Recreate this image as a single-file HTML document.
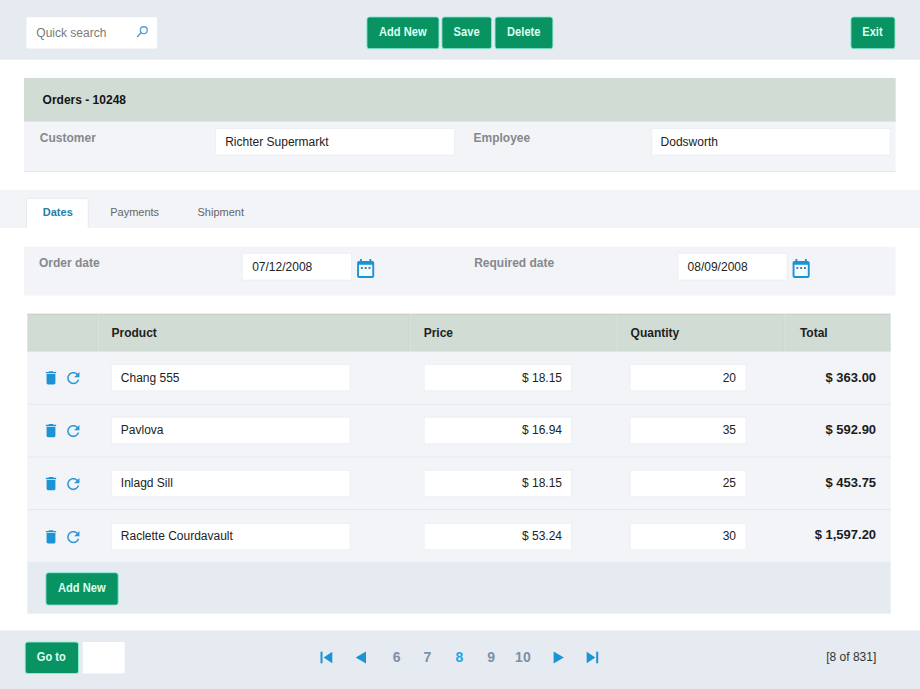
<!DOCTYPE html>
<html lang="en">
<head>
<meta charset="utf-8">
<title>Orders - 10248</title>
<style>
html,body{margin:0;padding:0;}
body{width:920px;height:689px;overflow:hidden;background:#fff;font-family:"Liberation Sans",sans-serif;color:#222;position:relative;}
#bg{position:absolute;left:0;top:0;}
.t{position:absolute;white-space:nowrap;line-height:16px;}
</style>
</head>
<body>
<svg id="bg" width="920" height="689" viewBox="0 0 920 689">
<rect x="0" y="0" width="920" height="59.7" fill="#e6eaf1"/>
<rect x="26.5" y="17.25" width="130.6" height="31.25" fill="#fff"/>
<rect x="366.9" y="16.9" width="72.1" height="31.85" fill="#0a9362" rx="2.6" stroke="#8eeeda" stroke-width="0.9"/>
<rect x="441.9" y="16.9" width="49.7" height="31.85" fill="#0a9362" rx="2.6" stroke="#8eeeda" stroke-width="0.9"/>
<rect x="495" y="16.9" width="57.9" height="31.85" fill="#0a9362" rx="2.6" stroke="#8eeeda" stroke-width="0.9"/>
<rect x="850.9" y="16.9" width="44.1" height="31.85" fill="#0a9362" rx="2.6" stroke="#8eeeda" stroke-width="0.9"/>
<rect x="24" y="78" width="871.6" height="93.6" fill="#f2f4f8"/>
<rect x="24" y="171" width="871.6" height="0.7" fill="#dfe2e7"/>
<rect x="24" y="78" width="871.6" height="43.6" fill="#d1dcd4"/>
<rect x="215.6" y="128.5" width="238.8" height="26.6" fill="#fff" stroke="#eceff3" stroke-width="1"/>
<rect x="651.7" y="128.5" width="238.5" height="26.6" fill="#fff" stroke="#eceff3" stroke-width="1"/>
<rect x="0" y="190" width="920" height="37.8" fill="#f2f4f8"/>
<path d="M26.5 228.5 V200.3 a2 2 0 0 1 2 -2 H86.2 a2 2 0 0 1 2 2 V228.5" fill="#fff" stroke="#e7eaee" stroke-width="1"/>
<rect x="26" y="227.8" width="64" height="1.4" fill="#fff"/>
<rect x="24" y="246.8" width="871.6" height="48.8" fill="#f2f4f8"/>
<rect x="242.2" y="253.3" width="109.4" height="26.9" fill="#fff" stroke="#eceff3" stroke-width="1"/>
<rect x="677.9" y="253.3" width="109.3" height="26.9" fill="#fff" stroke="#eceff3" stroke-width="1"/>
<rect x="27.3" y="314" width="863.4" height="37.6" fill="#d1dcd4"/>
<rect x="27.3" y="313.7" width="863.4" height="0.9" fill="#c6cac7"/>
<rect x="27.3" y="350.8" width="863.4" height="0.8" fill="#c9d4cc"/>
<rect x="27.3" y="351.6" width="863.4" height="210.4" fill="#f2f4f8"/>
<rect x="27.3" y="562" width="863.4" height="51.7" fill="#e6eaf1"/>
<rect x="27.3" y="403.8" width="863.4" height="1" fill="#e4e7ec"/>
<rect x="27.3" y="456.5" width="863.4" height="1" fill="#e4e7ec"/>
<rect x="27.3" y="509.1" width="863.4" height="1" fill="#e4e7ec"/>
<rect x="96.5" y="314.5" width="0.8" height="36.7" fill="#cad5cd"/>
<rect x="97.3" y="314.5" width="1.3" height="36.7" fill="#d8e1da"/>
<rect x="408.7" y="314.5" width="0.8" height="36.7" fill="#cad5cd"/>
<rect x="409.5" y="314.5" width="1.3" height="36.7" fill="#d8e1da"/>
<rect x="614.5" y="314.5" width="0.8" height="36.7" fill="#cad5cd"/>
<rect x="615.3" y="314.5" width="1.3" height="36.7" fill="#d8e1da"/>
<rect x="783.6" y="314.5" width="0.8" height="36.7" fill="#cad5cd"/>
<rect x="784.4" y="314.5" width="1.3" height="36.7" fill="#d8e1da"/>
<rect x="111.3" y="364.3" width="238.8" height="26.6" fill="#fff" stroke="#eceff3" stroke-width="1"/>
<rect x="424.1" y="364.3" width="147.5" height="26.6" fill="#fff" stroke="#eceff3" stroke-width="1"/>
<rect x="630.1" y="364.3" width="116" height="26.6" fill="#fff" stroke="#eceff3" stroke-width="1"/>
<path transform="translate(42.18 368.95) scale(0.735)" fill="#1b93d4" d="M6 19c0 1.1.9 2 2 2h8c1.1 0 2-.9 2-2V7H6v12zM19 4h-3.500l-1-1h-5l-1 1H5v2h14V4z"/>
<path transform="translate(64.14 368.94) scale(0.765)" fill="#2d97d6" d="M17.65 6.350C16.2 4.9 14.21 4 12 4c-4.420 0-7.990 3.580-7.990 8s3.570 8 7.990 8c3.730 0 6.840-2.550 7.730-6h-2.080c-.82 2.330-3.040 4-5.650 4-3.310 0-6-2.690-6-6s2.690-6 6-6c1.660 0 3.140.69 4.220 1.780L13 11h7V4l-2.350 2.350z"/>
<rect x="111.3" y="417.2" width="238.8" height="26.6" fill="#fff" stroke="#eceff3" stroke-width="1"/>
<rect x="424.1" y="417.2" width="147.5" height="26.6" fill="#fff" stroke="#eceff3" stroke-width="1"/>
<rect x="630.1" y="417.2" width="116" height="26.6" fill="#fff" stroke="#eceff3" stroke-width="1"/>
<path transform="translate(42.18 421.85) scale(0.735)" fill="#1b93d4" d="M6 19c0 1.1.9 2 2 2h8c1.1 0 2-.9 2-2V7H6v12zM19 4h-3.500l-1-1h-5l-1 1H5v2h14V4z"/>
<path transform="translate(64.14 421.84) scale(0.765)" fill="#2d97d6" d="M17.65 6.350C16.2 4.9 14.21 4 12 4c-4.420 0-7.990 3.580-7.990 8s3.570 8 7.990 8c3.730 0 6.840-2.550 7.730-6h-2.080c-.82 2.330-3.040 4-5.650 4-3.310 0-6-2.690-6-6s2.690-6 6-6c1.660 0 3.140.69 4.220 1.780L13 11h7V4l-2.350 2.350z"/>
<rect x="111.3" y="470.2" width="238.8" height="26.6" fill="#fff" stroke="#eceff3" stroke-width="1"/>
<rect x="424.1" y="470.2" width="147.5" height="26.6" fill="#fff" stroke="#eceff3" stroke-width="1"/>
<rect x="630.1" y="470.2" width="116" height="26.6" fill="#fff" stroke="#eceff3" stroke-width="1"/>
<path transform="translate(42.18 474.85) scale(0.735)" fill="#1b93d4" d="M6 19c0 1.1.9 2 2 2h8c1.1 0 2-.9 2-2V7H6v12zM19 4h-3.500l-1-1h-5l-1 1H5v2h14V4z"/>
<path transform="translate(64.14 474.84) scale(0.765)" fill="#2d97d6" d="M17.65 6.350C16.2 4.9 14.21 4 12 4c-4.420 0-7.990 3.580-7.990 8s3.570 8 7.990 8c3.730 0 6.840-2.550 7.730-6h-2.080c-.82 2.330-3.040 4-5.650 4-3.310 0-6-2.690-6-6s2.690-6 6-6c1.660 0 3.140.69 4.220 1.780L13 11h7V4l-2.350 2.350z"/>
<rect x="111.3" y="523.3" width="238.8" height="26.6" fill="#fff" stroke="#eceff3" stroke-width="1"/>
<rect x="424.1" y="523.3" width="147.5" height="26.6" fill="#fff" stroke="#eceff3" stroke-width="1"/>
<rect x="630.1" y="523.3" width="116" height="26.6" fill="#fff" stroke="#eceff3" stroke-width="1"/>
<path transform="translate(42.18 527.94) scale(0.735)" fill="#1b93d4" d="M6 19c0 1.1.9 2 2 2h8c1.1 0 2-.9 2-2V7H6v12zM19 4h-3.500l-1-1h-5l-1 1H5v2h14V4z"/>
<path transform="translate(64.14 527.94) scale(0.765)" fill="#2d97d6" d="M17.65 6.350C16.2 4.9 14.21 4 12 4c-4.420 0-7.990 3.580-7.990 8s3.570 8 7.990 8c3.730 0 6.840-2.550 7.730-6h-2.080c-.82 2.330-3.040 4-5.650 4-3.310 0-6-2.690-6-6s2.690-6 6-6c1.660 0 3.140.69 4.220 1.780L13 11h7V4l-2.350 2.350z"/>
<rect x="45.9" y="572.7" width="72.3" height="32.4" fill="#0a9362" rx="2.6" stroke="#8eeeda" stroke-width="0.9"/>
<g transform="translate(354.25 257.10) scale(0.95)"><rect x="5" y="8.1" width="14" height="11.9" fill="#f3fbff"/><path fill="#1b93d4" d="M19 4h-1V2h-2v2H8V2H6v2H5c-1.110 0-1.990.9-1.990 2L3 20c0 1.100.890 2 2 2h14c1.100 0 2-.9 2-2V6c0-1.100-.9-2-2-2zm0 16H5V8.1h14V20z"/><path fill="#3f7ea6" d="M9 10.5H7v2h2v-2zm4 0h-2v2h2v-2zm4 0h-2v2h2v-2z"/></g>
<g transform="translate(789.75 257.10) scale(0.95)"><rect x="5" y="8.1" width="14" height="11.9" fill="#f3fbff"/><path fill="#1b93d4" d="M19 4h-1V2h-2v2H8V2H6v2H5c-1.110 0-1.990.9-1.990 2L3 20c0 1.100.890 2 2 2h14c1.100 0 2-.9 2-2V6c0-1.100-.9-2-2-2zm0 16H5V8.1h14V20z"/><path fill="#3f7ea6" d="M9 10.5H7v2h2v-2zm4 0h-2v2h2v-2zm4 0h-2v2h2v-2z"/></g>
<circle cx="143.8" cy="30.2" r="3.45" fill="none" stroke="#5a9fd1" stroke-width="1.3"/><path d="M141.3 32.6 L137.6 36.5" stroke="#5a9fd1" stroke-width="1.5" stroke-linecap="round"/>
<rect x="0" y="630.5" width="920" height="58.5" fill="#e6eaf1"/>
<rect x="25.2" y="642" width="53.3" height="31.5" fill="#0a9362" rx="2.6" stroke="#8eeeda" stroke-width="0.9"/>
<rect x="82.8" y="642" width="41.8" height="31.4" fill="#fff"/>
<rect x="320.5" y="651.7" width="2" height="11.6" fill="#1b93d4"/><path d="M332.3 651.7 V663.3 L323.6 657.5z" fill="#1b93d4"/>
<path d="M366 651.5 V663.5 L355.7 657.5z" fill="#1b93d4"/>
<path d="M553.6 651.5 V663.5 L563.8 657.5z" fill="#1b93d4"/>
<rect x="596.2" y="651.7" width="2" height="11.6" fill="#1b93d4"/><path d="M586.7 651.7 V663.3 L595.3 657.5z" fill="#1b93d4"/>
</svg>
<div class="t" id="t0" style="top:23.77px;font-size:12.5px;color:#dcfff1;font-weight:bold;left:302.95px;width:200px;text-align:center;"><span style="display:inline-block;transform:scaleX(0.89);transform-origin:50% 50%;">Add New</span></div>
<div class="t" id="t1" style="top:23.77px;font-size:12.5px;color:#dcfff1;font-weight:bold;left:366.88px;width:200px;text-align:center;"><span style="display:inline-block;transform:scaleX(0.89);transform-origin:50% 50%;">Save</span></div>
<div class="t" id="t2" style="top:23.77px;font-size:12.5px;color:#dcfff1;font-weight:bold;left:424.12px;width:200px;text-align:center;"><span style="display:inline-block;transform:scaleX(0.89);transform-origin:50% 50%;">Delete</span></div>
<div class="t" id="t3" style="top:23.77px;font-size:12.5px;color:#dcfff1;font-weight:bold;left:772.80px;width:200px;text-align:center;"><span style="display:inline-block;transform:scaleX(0.89);transform-origin:50% 50%;">Exit</span></div>
<div class="t" id="t4" style="top:24.63px;font-size:12px;color:#7a7a7a;left:36.30px;">Quick search</div>
<div class="t" id="t5" style="top:92.03px;font-size:12px;color:#151515;font-weight:bold;left:42.60px;">Orders - 10248</div>
<div class="t" id="t6" style="top:129.93px;font-size:12px;color:#85888c;font-weight:bold;left:39.80px;">Customer</div>
<div class="t" id="t7" style="top:133.83px;font-size:12px;color:#222;left:225.20px;">Richter Supermarkt</div>
<div class="t" id="t8" style="top:129.83px;font-size:12px;color:#85888c;font-weight:bold;left:473.50px;">Employee</div>
<div class="t" id="t9" style="top:133.83px;font-size:12px;color:#222;left:660.60px;">Dodsworth</div>
<div class="t" id="t10" style="top:204.16px;font-size:11px;color:#1f7fa5;font-weight:bold;left:42.80px;">Dates</div>
<div class="t" id="t11" style="top:204.36px;font-size:11px;color:#666;left:110.20px;">Payments</div>
<div class="t" id="t12" style="top:204.36px;font-size:11px;color:#666;left:197.50px;">Shipment</div>
<div class="t" id="t13" style="top:254.88px;font-size:12px;color:#85888c;font-weight:bold;left:38.90px;">Order date</div>
<div class="t" id="t14" style="top:259.03px;font-size:12px;color:#222;left:252.20px;">07/12/2008</div>
<div class="t" id="t15" style="top:255.33px;font-size:12px;color:#85888c;font-weight:bold;left:474.20px;">Required date</div>
<div class="t" id="t16" style="top:259.03px;font-size:12px;color:#222;left:687.60px;">08/09/2008</div>
<div class="t" id="t17" style="top:325.23px;font-size:12px;color:#222;font-weight:bold;left:111.50px;">Product</div>
<div class="t" id="t18" style="top:325.23px;font-size:12px;color:#222;font-weight:bold;left:423.70px;">Price</div>
<div class="t" id="t19" style="top:325.23px;font-size:12px;color:#222;font-weight:bold;left:630.60px;">Quantity</div>
<div class="t" id="t20" style="top:325.23px;font-size:12px;color:#222;font-weight:bold;left:799.90px;">Total</div>
<div class="t" id="t21" style="top:370.03px;font-size:12px;color:#222;left:120.80px;">Chang 555</div>
<div class="t" id="t22" style="top:370.03px;font-size:12px;color:#222;right:358.00px;">$ 18.15</div>
<div class="t" id="t23" style="top:370.03px;font-size:12px;color:#222;right:184.00px;">20</div>
<div class="t" id="t24" style="top:369.70px;font-size:13px;color:#1c1c1c;font-weight:bold;right:43.90px;">$ 363.00</div>
<div class="t" id="t25" style="top:421.83px;font-size:12px;color:#222;left:120.80px;">Pavlova</div>
<div class="t" id="t26" style="top:421.83px;font-size:12px;color:#222;right:358.00px;">$ 16.94</div>
<div class="t" id="t27" style="top:421.83px;font-size:12px;color:#222;right:184.00px;">35</div>
<div class="t" id="t28" style="top:421.50px;font-size:13px;color:#1c1c1c;font-weight:bold;right:43.90px;">$ 592.90</div>
<div class="t" id="t29" style="top:474.83px;font-size:12px;color:#222;left:120.80px;">Inlagd Sill</div>
<div class="t" id="t30" style="top:474.83px;font-size:12px;color:#222;right:358.00px;">$ 18.15</div>
<div class="t" id="t31" style="top:474.83px;font-size:12px;color:#222;right:184.00px;">25</div>
<div class="t" id="t32" style="top:474.50px;font-size:13px;color:#1c1c1c;font-weight:bold;right:43.90px;">$ 453.75</div>
<div class="t" id="t33" style="top:527.63px;font-size:12px;color:#222;left:120.80px;">Raclette Courdavault</div>
<div class="t" id="t34" style="top:527.63px;font-size:12px;color:#222;right:358.00px;">$ 53.24</div>
<div class="t" id="t35" style="top:527.63px;font-size:12px;color:#222;right:184.00px;">30</div>
<div class="t" id="t36" style="top:527.30px;font-size:13px;color:#1c1c1c;font-weight:bold;right:43.90px;">$ 1,597.20</div>
<div class="t" id="t37" style="top:579.97px;font-size:12.5px;color:#dcfff1;font-weight:bold;left:-18.15px;width:200px;text-align:center;"><span style="display:inline-block;transform:scaleX(0.89);transform-origin:50% 50%;">Add New</span></div>
<div class="t" id="t38" style="top:648.77px;font-size:12.5px;color:#dcfff1;font-weight:bold;left:-48.25px;width:200px;text-align:center;"><span style="display:inline-block;transform:scaleX(0.89);transform-origin:50% 50%;">Go to</span></div>
<div class="t" id="t39" style="top:649.37px;font-size:14px;color:#7e90a5;font-weight:bold;left:296.60px;width:200px;text-align:center;">6</div>
<div class="t" id="t40" style="top:649.37px;font-size:14px;color:#7e90a5;font-weight:bold;left:327.50px;width:200px;text-align:center;">7</div>
<div class="t" id="t41" style="top:649.37px;font-size:14px;color:#1aa7e8;font-weight:bold;left:359.40px;width:200px;text-align:center;">8</div>
<div class="t" id="t42" style="top:649.37px;font-size:14px;color:#7e90a5;font-weight:bold;left:391.20px;width:200px;text-align:center;">9</div>
<div class="t" id="t43" style="top:649.37px;font-size:14px;color:#7e90a5;font-weight:bold;left:422.90px;width:200px;text-align:center;">10</div>
<div class="t" id="t44" style="top:648.63px;font-size:12px;color:#333;right:43.70px;">[8 of 831]</div>
</body>
</html>
